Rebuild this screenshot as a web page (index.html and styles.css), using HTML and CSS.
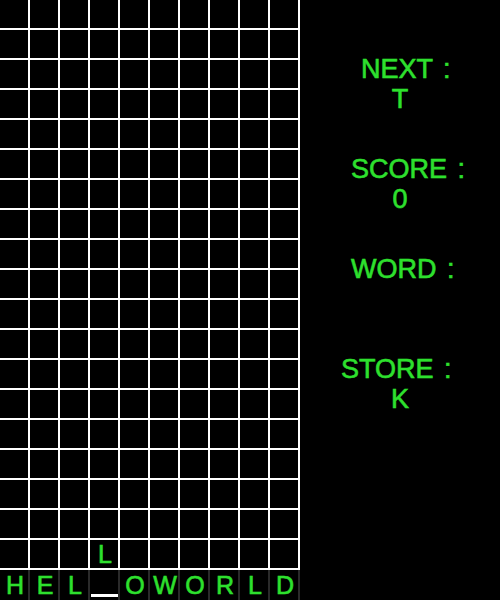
FILE: index.html
```html
<!DOCTYPE html>
<html>
<head>
<meta charset="utf-8">
<link rel="stylesheet" href="styles.css">
</head>
<body>
<div class="game">
  <div class="board">
    <div class="c"></div><div class="c"></div><div class="c"></div><div class="c"></div><div class="c"></div><div class="c"></div><div class="c"></div><div class="c"></div><div class="c"></div><div class="c"></div>
    <div class="c"></div><div class="c"></div><div class="c"></div><div class="c"></div><div class="c"></div><div class="c"></div><div class="c"></div><div class="c"></div><div class="c"></div><div class="c"></div>
    <div class="c"></div><div class="c"></div><div class="c"></div><div class="c"></div><div class="c"></div><div class="c"></div><div class="c"></div><div class="c"></div><div class="c"></div><div class="c"></div>
    <div class="c"></div><div class="c"></div><div class="c"></div><div class="c"></div><div class="c"></div><div class="c"></div><div class="c"></div><div class="c"></div><div class="c"></div><div class="c"></div>
    <div class="c"></div><div class="c"></div><div class="c"></div><div class="c"></div><div class="c"></div><div class="c"></div><div class="c"></div><div class="c"></div><div class="c"></div><div class="c"></div>
    <div class="c"></div><div class="c"></div><div class="c"></div><div class="c"></div><div class="c"></div><div class="c"></div><div class="c"></div><div class="c"></div><div class="c"></div><div class="c"></div>
    <div class="c"></div><div class="c"></div><div class="c"></div><div class="c"></div><div class="c"></div><div class="c"></div><div class="c"></div><div class="c"></div><div class="c"></div><div class="c"></div>
    <div class="c"></div><div class="c"></div><div class="c"></div><div class="c"></div><div class="c"></div><div class="c"></div><div class="c"></div><div class="c"></div><div class="c"></div><div class="c"></div>
    <div class="c"></div><div class="c"></div><div class="c"></div><div class="c"></div><div class="c"></div><div class="c"></div><div class="c"></div><div class="c"></div><div class="c"></div><div class="c"></div>
    <div class="c"></div><div class="c"></div><div class="c"></div><div class="c"></div><div class="c"></div><div class="c"></div><div class="c"></div><div class="c"></div><div class="c"></div><div class="c"></div>
    <div class="c"></div><div class="c"></div><div class="c"></div><div class="c"></div><div class="c"></div><div class="c"></div><div class="c"></div><div class="c"></div><div class="c"></div><div class="c"></div>
    <div class="c"></div><div class="c"></div><div class="c"></div><div class="c"></div><div class="c"></div><div class="c"></div><div class="c"></div><div class="c"></div><div class="c"></div><div class="c"></div>
    <div class="c"></div><div class="c"></div><div class="c"></div><div class="c"></div><div class="c"></div><div class="c"></div><div class="c"></div><div class="c"></div><div class="c"></div><div class="c"></div>
    <div class="c"></div><div class="c"></div><div class="c"></div><div class="c"></div><div class="c"></div><div class="c"></div><div class="c"></div><div class="c"></div><div class="c"></div><div class="c"></div>
    <div class="c"></div><div class="c"></div><div class="c"></div><div class="c"></div><div class="c"></div><div class="c"></div><div class="c"></div><div class="c"></div><div class="c"></div><div class="c"></div>
    <div class="c"></div><div class="c"></div><div class="c"></div><div class="c"></div><div class="c"></div><div class="c"></div><div class="c"></div><div class="c"></div><div class="c"></div><div class="c"></div>
    <div class="c"></div><div class="c"></div><div class="c"></div><div class="c"></div><div class="c"></div><div class="c"></div><div class="c"></div><div class="c"></div><div class="c"></div><div class="c"></div>
    <div class="c"></div><div class="c"></div><div class="c"></div><div class="c"></div><div class="c"></div><div class="c"></div><div class="c"></div><div class="c"></div><div class="c"></div><div class="c"></div>
    <div class="c"></div><div class="c"></div><div class="c"></div><div class="c">L</div><div class="c"></div><div class="c"></div><div class="c"></div><div class="c"></div><div class="c"></div><div class="c"></div>
    <div class="c last">H</div><div class="c last">E</div><div class="c last">L</div><div class="c last cursor"><span class="bar"></span></div><div class="c last">O</div><div class="c last">W</div><div class="c last">O</div><div class="c last">R</div><div class="c last">L</div><div class="c last">D</div>
  </div>
  <div class="panel">
    <div class="block">
      <div class="label ind-next">NEXT :</div>
      <div class="value">T</div>
    </div>
    <div class="block">
      <div class="label ind-score">SCORE :</div>
      <div class="value">0</div>
    </div>
    <div class="block">
      <div class="label ind-word">WORD :</div>
      <div class="value"></div>
    </div>
    <div class="block">
      <div class="label ind-store">STORE :</div>
      <div class="value">K</div>
    </div>
  </div>
</div>
</body>
</html>
```
FILE: styles.css
```css
html, body {
  margin: 0;
  padding: 0;
  background: #000;
}
.game {
  display: flex;
  width: 500px;
  height: 600px;
  background: #000;
  font-family: "Liberation Sans", Arial, sans-serif;
  color: #2ee02e;
  -webkit-text-stroke: 0.6px #2ee02e;
}
.board {
  width: 300px;
  height: 600px;
  display: grid;
  grid-template-columns: repeat(10, 30px);
  grid-template-rows: repeat(20, 30px);
}
.c {
  box-sizing: border-box;
  border-right: 2px solid #fff;
  border-bottom: 2px solid #fff;
  display: flex;
  align-items: center;
  justify-content: center;
  font-size: 25px;
  line-height: 1;
  padding-left: 2px;
}
.c.last {
  border-right-color: #2a2a2a;
  border-bottom: none;
}
.c.cursor {
  flex-direction: column;
  justify-content: flex-end;
  align-items: stretch;
  padding: 0 0 3px 1px;
}
.bar {
  display: block;
  height: 3px;
  background: #fff;
}
.panel {
  width: 200px;
  display: flex;
  flex-direction: column;
  padding-top: 54px;
  gap: 40px;
  font-size: 27px;
  line-height: 30px;
}
.block {
  display: flex;
  flex-direction: column;
  height: 60px;
}
.label {
  white-space: pre;
  word-spacing: 3px;
}
.value {
  text-align: center;
  height: 30px;
}
.ind-next { padding-left: 61px; }
.ind-score { padding-left: 51px; }
.ind-word { padding-left: 51px; }
.ind-store { padding-left: 41px; }
```
